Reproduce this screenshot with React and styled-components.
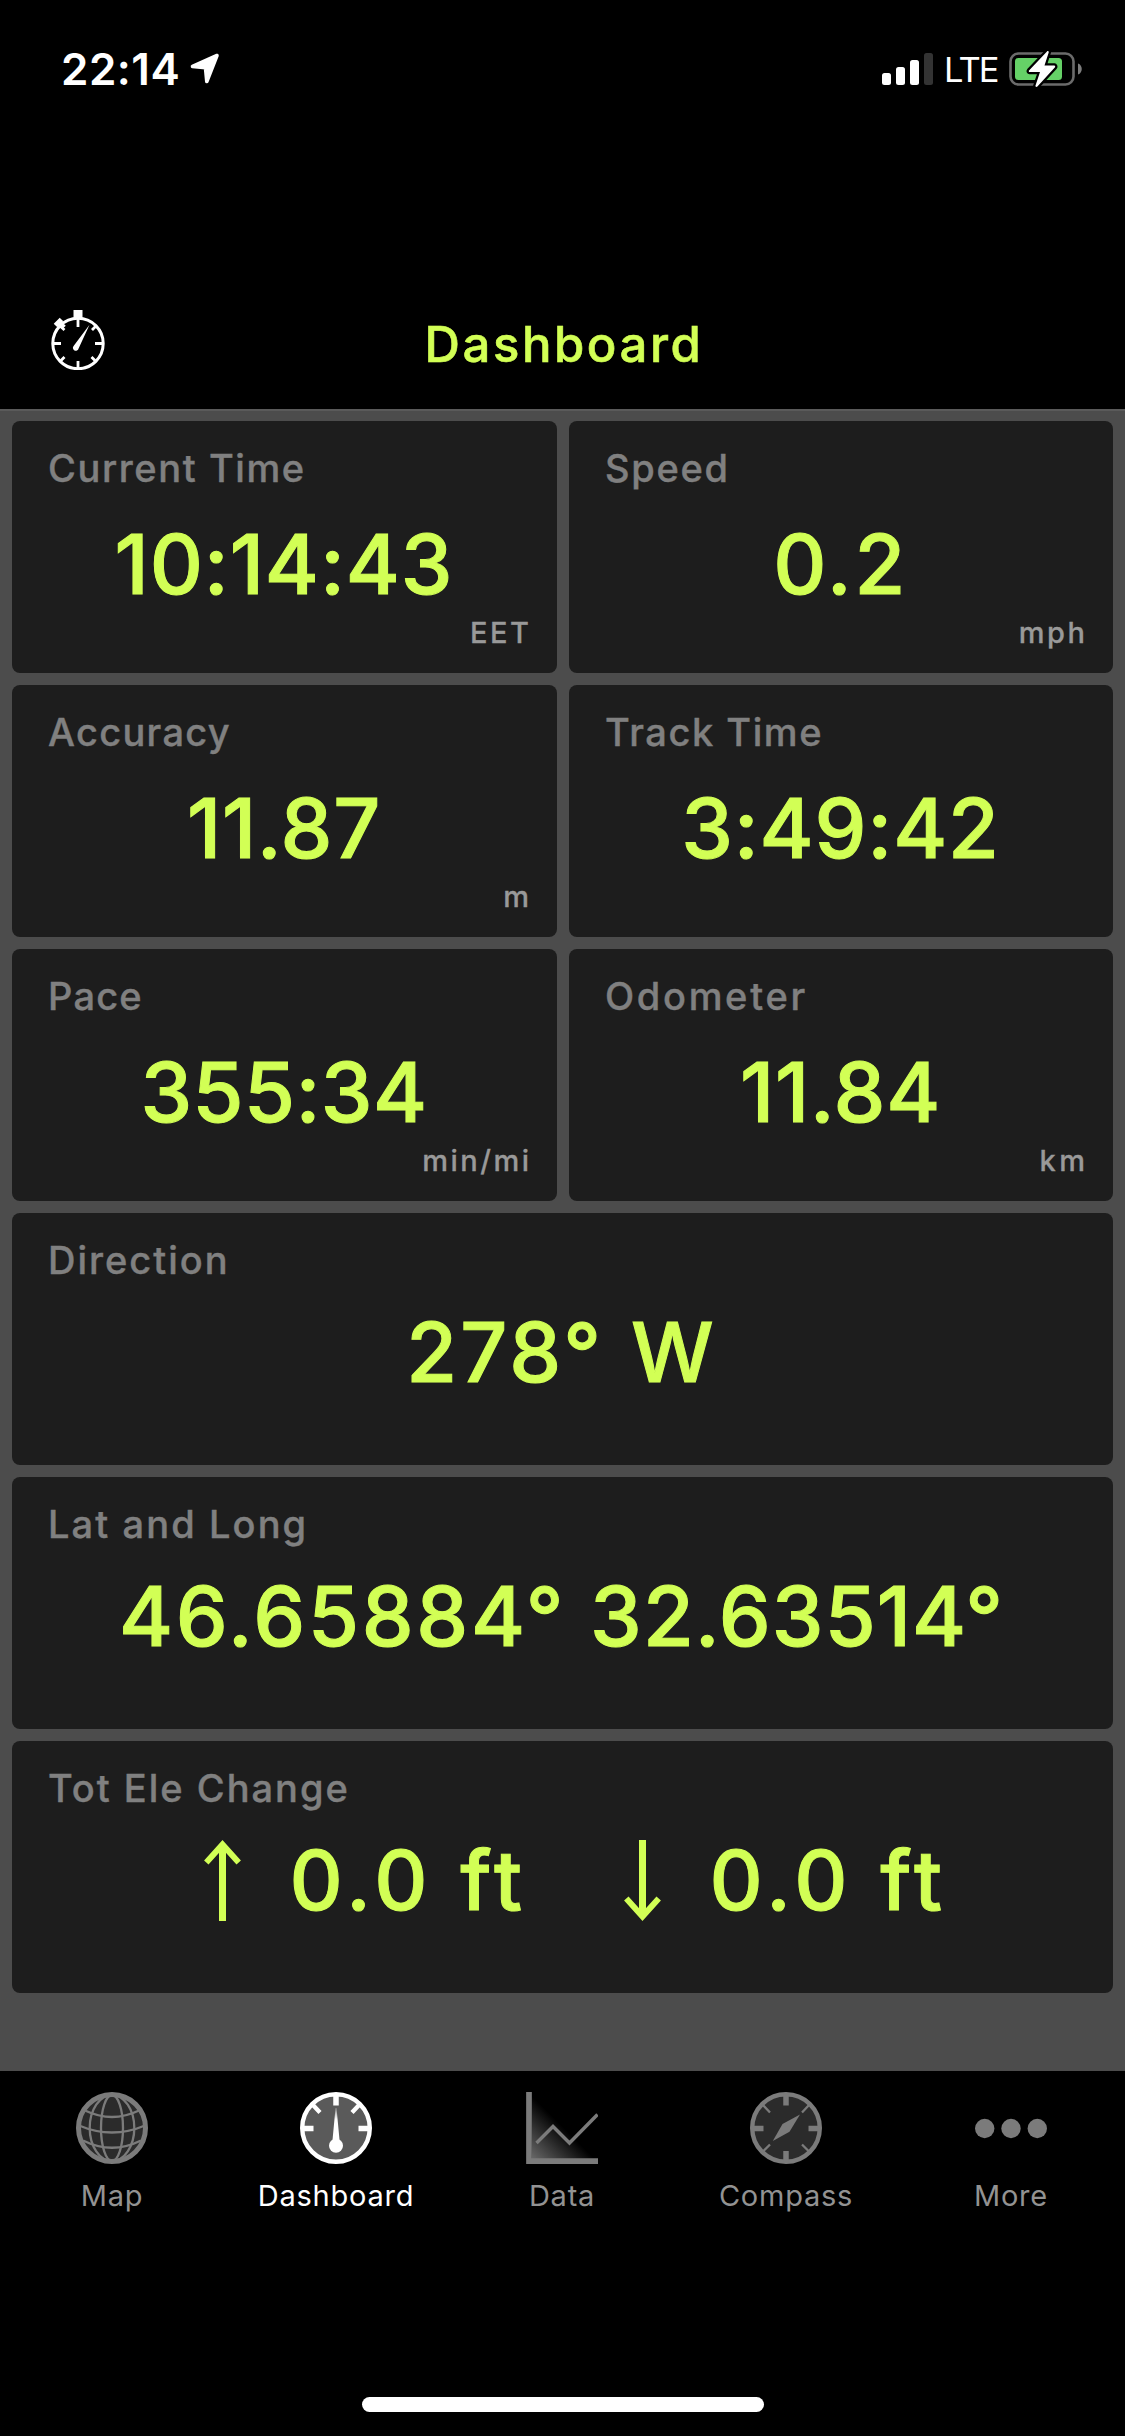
import React from "react";
import styled, {createGlobalStyle} from "styled-components";

const readings = [
  {label: "Current Time", labelGap: 1.6, value: "10:14:43", valueGap: 0.9, unit: "EET", unitGap: 2.6},
  {label: "Speed", labelGap: 1.7, value: "0.2", valueGap: 2.6, unit: "mph", unitGap: 2.6},
  {label: "Accuracy", labelGap: 1.3, value: "11.87", valueGap: 0.7, unit: "m", unitGap: 0},
  {label: "Track Time", labelGap: 1.55, value: "3:49:42", valueGap: 0.8},
  {label: "Pace", labelGap: 1.2, value: "355:34", valueGap: 0.4, unit: "min/mi", unitGap: 2.5},
  {label: "Odometer", labelGap: 2.7, value: "11.84", valueGap: 0.7, unit: "km", unitGap: 3.5},
];

const StopwatchIcon = () => (
  <svg width="60" height="60" viewBox="0 0 60 60" fill="none" stroke="#fff">
    <circle cx="30" cy="33.5" r="25.2" strokeWidth="3"/>
    <path d="M25.5 0h9v9h-9z" fill="#fff" stroke="none"/>
    <path d="M30 8v9M30 59v-8M4 33.5h9M56 33.5h-9" strokeWidth="2.8"/>
    <path d="M12 16l4.5 4M48 16l-4 4M12.500 51l4-4M47.500 51l-4-4" strokeWidth="2.8"/>
    <path d="M7.500 15.500l6-6M12 13.500l4 4" strokeWidth="5"/>
    <path d="M41.500 14.800L30.600 38.500a2.900 2.900 0 1 1-5-2.600z" fill="#fff" stroke="none"/>
  </svg>
);

const LocationIcon = () => (
  <svg width="30" height="32" viewBox="0 0 30 32">
    <path d="M27 2.500L2.500 13.500L15.500 14.800L16.800 28.500Z" fill="#fff" stroke="#fff" strokeWidth="3.600" strokeLinejoin="round"/>
  </svg>
);

const SignalIcon = () => (
  <svg width="51" height="32" viewBox="0 0 51 32" fill="#fff">
    <rect x="0" y="20" width="9" height="12" rx="2.500"/>
    <rect x="14" y="14" width="9" height="18" rx="2.500"/>
    <rect x="28" y="7" width="9" height="25" rx="2.500"/>
    <rect x="42" y="0" width="9" height="32" rx="2.500" fill="#333"/>
  </svg>
);

const BatteryIcon = () => (
  <svg width="74" height="40" viewBox="0 0 74 40">
    <rect x="1.500" y="4.500" width="63" height="31" rx="8" fill="none" stroke="#6b6b6b" strokeWidth="2.600"/>
    <path d="M69 14.500c5 1.500 5 9.500 0 11z" fill="#7d7d7d"/>
    <rect x="6" y="9" width="47" height="22" rx="3.500" fill="#65d167"/>
    <path
      d="M38 2.500L20 21.500a1 1 0 0 0 .7 1.600H31L26.500 36.500c-.4 1.300 1 2 1.900 1L46 18.200a1 1 0 0 0-.7-1.600H35.500L39.700 3.500c.3-1.200-.9-2-1.700-1z"
      fill="#fff"
      stroke="#000"
      strokeWidth="4.500"
      paintOrder="stroke"
    />
  </svg>
);

const ArrowIcon = ({down}) => (
  <svg width="37" height="81" viewBox="0 0 37 81" fill="none" stroke="#d2ff55">
    <g transform={down ? "rotate(180 18.500 40.500)" : undefined}>
      <path d="M18.500 81V6" strokeWidth="7"/>
      <path d="M2.300 22.500L18.500 4.500L34.700 22.500" strokeWidth="6"/>
    </g>
  </svg>
);

const GlobeIcon = () => (
  <svg width="72" height="72" viewBox="0 0 72 72" fill="none" stroke="currentColor">
    <circle cx="36" cy="36" r="33.500" fill="#2b2b2b" strokeWidth="5"/>
    <g strokeWidth="2.300">
      <ellipse cx="36" cy="36" rx="11" ry="33"/>
      <ellipse cx="36" cy="36" rx="22.300" ry="33"/>
      <path d="M9 18.500Q36 31.500 63 18.500"/>
      <path d="M3 33.500Q36 47.500 69 33.500"/>
      <path d="M7 48.500Q36 63 65 48.500"/>
    </g>
  </svg>
);

const GaugeIcon = () => (
  <svg width="72" height="72" viewBox="0 0 72 72" fill="none" stroke="currentColor">
    <defs>
      <linearGradient id="needle" x1="0" y1="0" x2="0" y2="1">
        <stop offset="0" stopColor="#fff" stopOpacity="0.3"/>
        <stop offset="0.35" stopColor="#fff"/>
      </linearGradient>
    </defs>
    <circle cx="36" cy="36" r="33.800" fill="#5a5a5a" strokeWidth="4.400"/>
    <path d="M36 2v11.500M2 36.500h11.500M70 36.500H58.500" strokeWidth="5.500"/>
    <path d="M12 12l8 8.500M60 12l-8 8.500" strokeWidth="4.300"/>
    <path d="M35.500 16h1L39.500 48h-7z" fill="url(#needle)" stroke="none"/>
    <circle cx="36" cy="53.700" r="7" fill="currentColor" stroke="none"/>
  </svg>
);

const ChartIcon = () => (
  <svg width="72" height="72" viewBox="0 0 72 72" fill="none" stroke="currentColor">
    <defs>
      <linearGradient id="chartFade" gradientUnits="userSpaceOnUse" x1="2" y1="70" x2="37" y2="35">
        <stop offset="0" stopColor="#747474"/>
        <stop offset="1" stopColor="#000"/>
      </linearGradient>
    </defs>
    <path d="M6 4V67H70z" fill="url(#chartFade)" stroke="none"/>
    <path d="M3 0V69.200H72" strokeWidth="5.700"/>
    <path d="M10.500 51L27 34.500L43.500 51L71.500 22.500" strokeWidth="3.400"/>
  </svg>
);

const CompassIcon = () => (
  <svg width="72" height="72" viewBox="0 0 72 72" fill="none" stroke="currentColor">
    <circle cx="36" cy="36" r="33.800" fill="#2b2b2b" strokeWidth="4.400"/>
    <path d="M36 2v11.500M36 70V59M2 36.500h11.500M70 36.500H58.500" strokeWidth="5.500"/>
    <path d="M12.500 12.500l7.500 8M59.500 12.500l-7.500 8M12.500 60l7.500-7.500M59.500 60l-7.500-7.500" strokeWidth="2.300"/>
    <path d="M50 22.500L39.500 39.800L22.800 49L32.500 32z" fill="currentColor" stroke="none"/>
  </svg>
);

const MoreIcon = () => (
  <svg width="72" height="72" viewBox="0 0 72 72" fill="currentColor">
    <circle cx="9.700" cy="36.500" r="9.700"/>
    <circle cx="36" cy="36.500" r="9.700"/>
    <circle cx="62.300" cy="36.500" r="9.700"/>
  </svg>
);

const tabs = [
  {name: "Map", icon: <GlobeIcon/>},
  {name: "Dashboard", icon: <GaugeIcon/>, active: true},
  {name: "Data", icon: <ChartIcon/>},
  {name: "Compass", icon: <CompassIcon/>},
  {name: "More", icon: <MoreIcon/>},
];

const App = () => {
  return (
    <Screen>
      <GlobalStyle/>
      <StatusBar>
        <Clock>22:14</Clock>
        <LocationIcon/>
        <Signals>
          <SignalIcon/>
          <Network>LTE</Network>
          <BatteryIcon/>
        </Signals>
      </StatusBar>
      <NavBar>
        <NavButton aria-label="Stopwatch"><StopwatchIcon/></NavButton>
        <Title>Dashboard</Title>
      </NavBar>
      <Board>
        {readings.map((item) => (
          <Card key={item.label}>
            <Label $gap={item.labelGap}>{item.label}</Label>
            <Reading>
              <Value $gap={item.valueGap}>{item.value}</Value>
            </Reading>
            {item.unit && <Unit $gap={item.unitGap}>{item.unit}</Unit>}
          </Card>
        ))}
        <Card $wide>
          <Label $gap={2}>Direction</Label>
          <Reading $wide className="direction">
            <Value $gap={3.1}>278°</Value>
            <Value $gap={0}>W</Value>
          </Reading>
        </Card>
        <Card $wide>
          <Label $gap={2.1}>Lat and Long</Label>
          <Reading $wide className="position">
            <Value $gap={2.7}>46.65884°</Value>
            <Value $gap={1.1}>32.63514°</Value>
          </Reading>
        </Card>
        <Card $wide>
          <Label $gap={2}>Tot Ele Change</Label>
          <Reading $wide className="elevation">
            <Change>
              <ArrowIcon/>
              <Value $gap={5.4}>0.0 ft</Value>
            </Change>
            <Change>
              <ArrowIcon down/>
              <Value $gap={5.4}>0.0 ft</Value>
            </Change>
          </Reading>
        </Card>
      </Board>
      <TabBar>
        {tabs.map((tab) => (
          <Tab key={tab.name} $active={tab.active}>
            {tab.icon}
            <span>{tab.name}</span>
          </Tab>
        ))}
      </TabBar>
      <HomeIndicator/>
    </Screen>
  );
};

const GlobalStyle = createGlobalStyle`
  *{
    box-sizing: border-box;
  }
  body{
    margin: 0;
    background: #000;
    font-family: Inter, Roboto, sans-serif;
    font-variant-ligatures: none;
  }
  svg{
    display: block;
    flex-shrink: 0;
  }
`;

const Screen = styled.main`
  display: flex;
  flex-direction: column;
  width: 1125px;
  height: 2436px;
  background: #000;
  overflow: hidden;
`;

const StatusBar = styled.header`
  display: flex;
  align-items: center;
  height: 138px;
  padding: 0 42px 0 61px;
  color: #fff;
`;

const Clock = styled.span`
  width: 129px;
  font-size: 44px;
  font-weight: 600;
  line-height: 60px;
  letter-spacing: 0.5px;
`;

const Signals = styled.div`
  display: flex;
  align-items: center;
  margin-left: auto;
`;

const Network = styled.span`
  width: 65px;
  margin: 2px 0 0 11px;
  font-size: 34.5px;
  line-height: 48px;
  letter-spacing: -1.8px;
`;

const NavBar = styled.nav`
  display: grid;
  grid-template-columns: 200px 1fr 200px;
  align-items: center;
  height: 129px;
  margin-top: 142px;
`;

const NavButton = styled.button`
  width: 60px;
  height: 60px;
  margin: -9px 0 0 48px;
  padding: 0;
  border: none;
  background: none;
`;

const Title = styled.h1`
  margin: 0;
  padding-left: 3px;
  color: #d2ff55;
  font-size: 49px;
  font-weight: 500;
  line-height: 60px;
  letter-spacing: 2.6px;
  text-align: center;
  -webkit-text-stroke: 0.6px #d2ff55;
`;

const Board = styled.section`
  display: grid;
  grid-template-columns: 545px 544px;
  grid-auto-rows: 252px;
  gap: 12px;
  align-content: start;
  height: 1662px;
  padding: 10px 12px 0;
  border-top: 2px solid #5a5a5a;
  background: #4c4c4c;
`;

const Card = styled.article`
  display: flex;
  flex-direction: column;
  grid-column: ${(p) => (p.$wide ? "1 / -1" : "auto")};
  padding-top: 23px;
  border-radius: 8px;
  background: #1d1d1d;
`;

const Label = styled.h2`
  margin: 0;
  padding-left: 36px;
  color: #808080;
  font-size: 38px;
  font-weight: 500;
  line-height: 48px;
  letter-spacing: ${(p) => p.$gap}px;
  -webkit-text-stroke: 0.4px #808080;
`;

const Reading = styled.div`
  display: flex;
  align-items: center;
  justify-content: center;
  height: 96px;
  margin-top: ${(p) => (p.$wide ? 20 : 24)}px;
  padding-right: ${(p) => (p.$wide ? 0 : 1)}px;
  &.direction{
    gap: 27px;
    padding-right: 5px;
  }
  &.position{
    gap: 24px;
    padding-right: 2px;
  }
  &.elevation{
    gap: 96px;
    padding-left: 26px;
  }
`;

const Value = styled.span`
  color: #d2ff55;
  font-size: 82.5px;
  font-weight: 500;
  line-height: 96px;
  letter-spacing: ${(p) => p.$gap}px;
  white-space: pre;
  -webkit-text-stroke: 1px #d2ff55;
`;

const Change = styled.div`
  display: flex;
  align-items: center;
  gap: 49px;
`;

const Unit = styled.span`
  align-self: flex-end;
  margin-right: ${(p) => 28 - p.$gap}px;
  color: #999;
  font-size: 29px;
  font-weight: 500;
  line-height: 42px;
  letter-spacing: ${(p) => p.$gap}px;
  -webkit-text-stroke: 0.3px #999;
`;

const TabBar = styled.nav`
  display: grid;
  grid-template-columns: 224px 224px 228px 220px 230px;
  padding-top: 21px;
`;

const Tab = styled.a`
  display: flex;
  flex-direction: column;
  align-items: center;
  color: ${(p) => (p.$active ? "#fff" : "#7b7b7b")};
  span{
    margin-top: 12px;
    color: ${(p) => (p.$active ? "#fff" : "#929292")};
    font-size: 29px;
    line-height: 40px;
    letter-spacing: 0.75px;
  }
`;

const HomeIndicator = styled.div`
  width: 402px;
  height: 15px;
  margin: auto auto 24px;
  border-radius: 8px;
  background: #fff;
`;

export default App;
